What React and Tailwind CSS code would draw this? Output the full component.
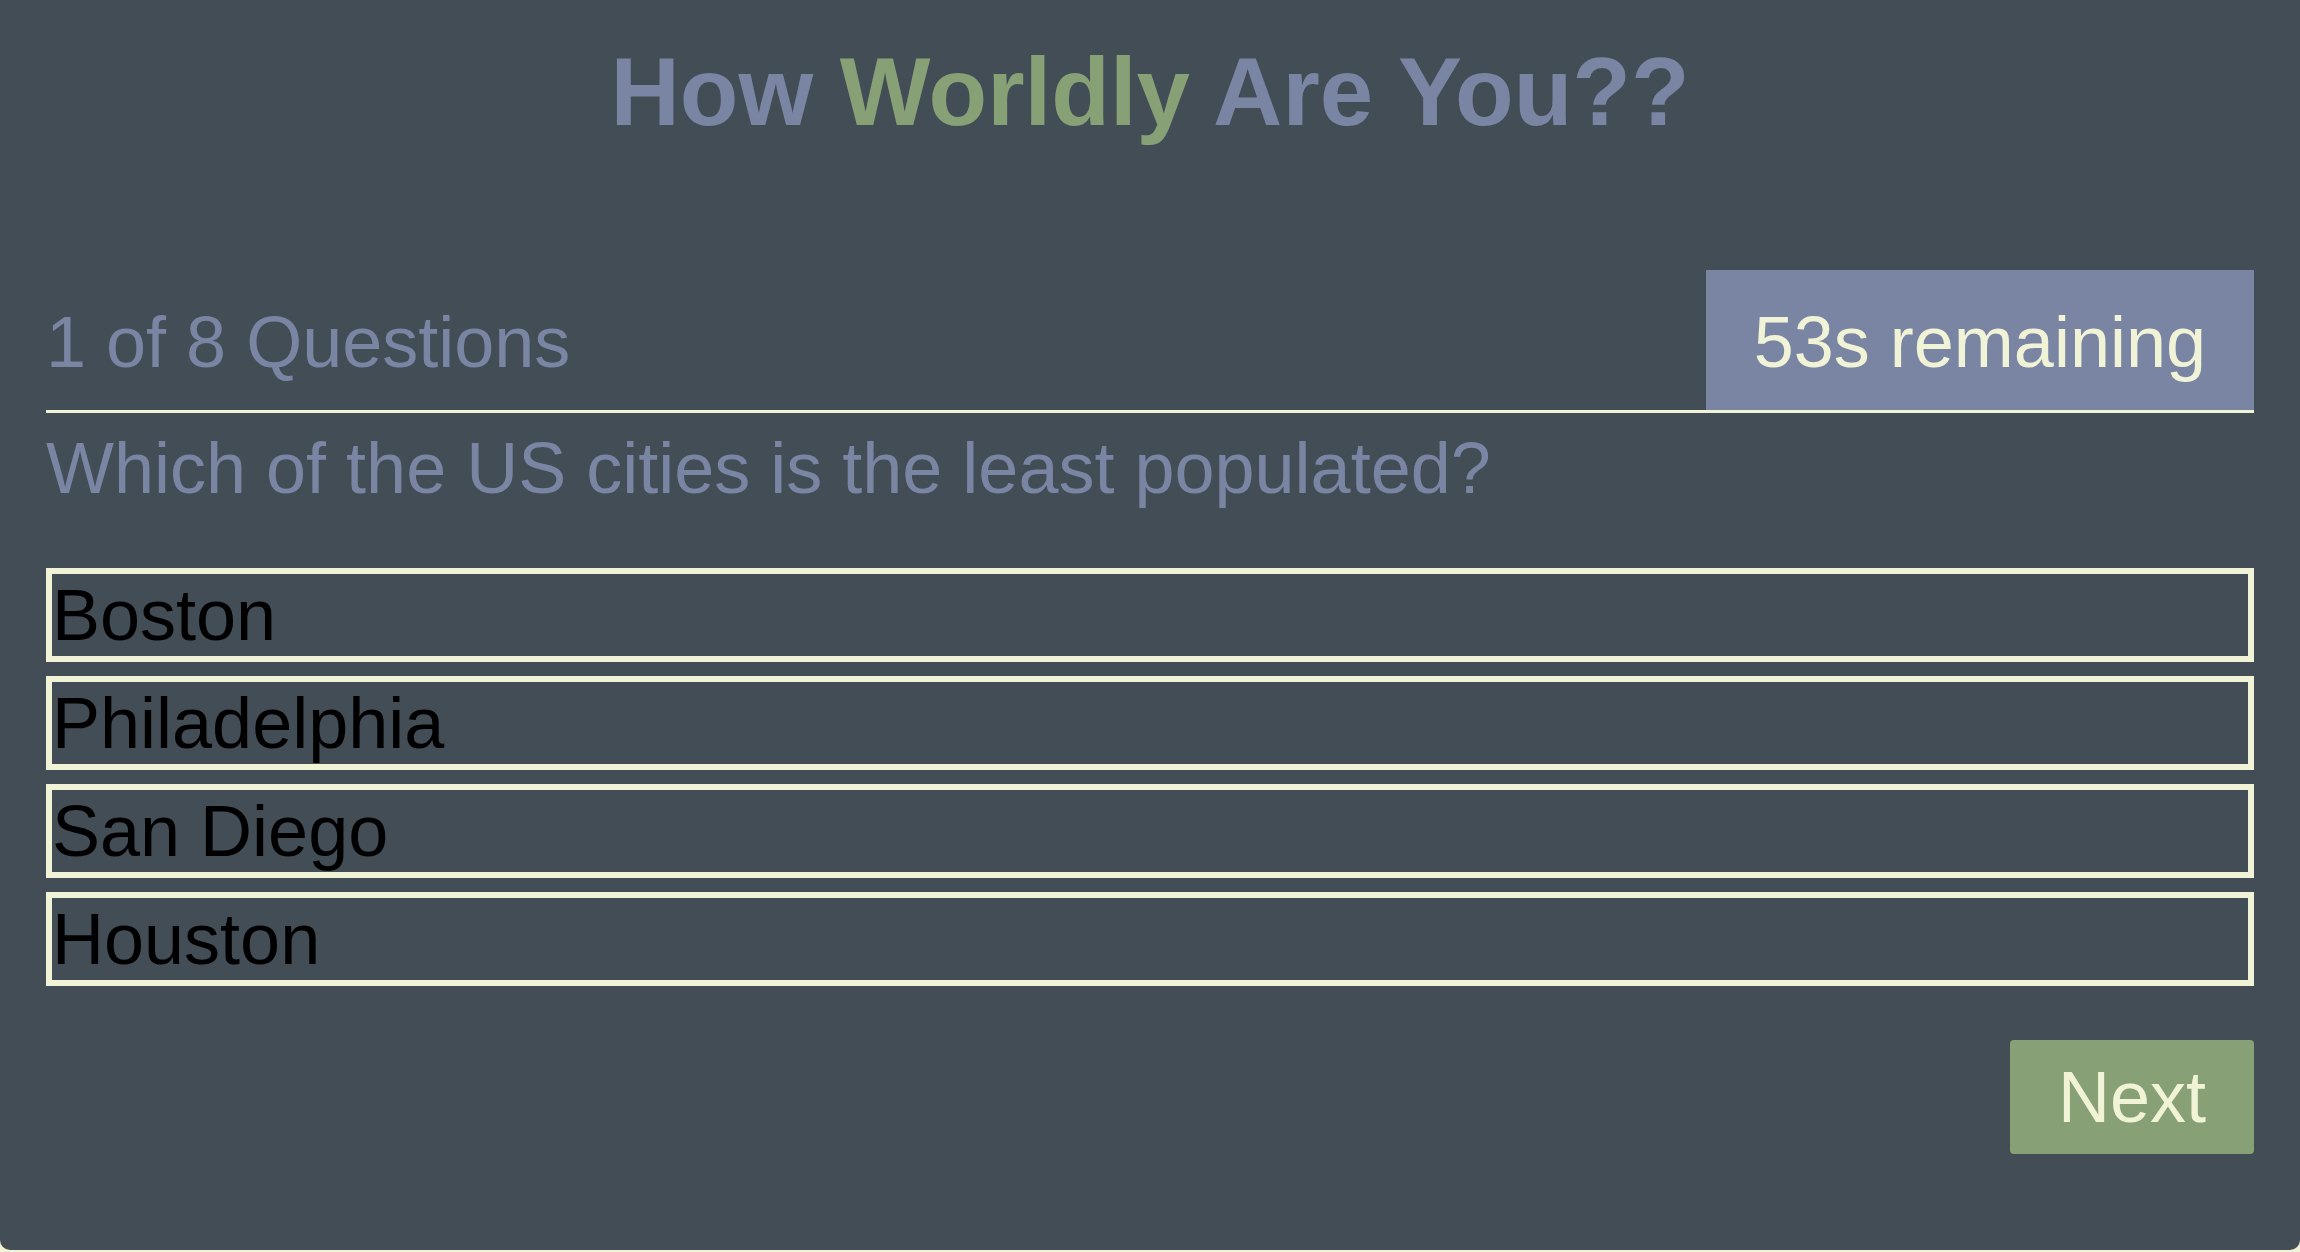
import React, { useState } from "react";

const options = ["Boston", "Philadelphia", "San Diego", "Houston"];

export default function App() {
  const [selected, setSelected] = useState(null);

  return (
    <div className="min-h-screen bg-[#f0f3d5] font-['Liberation_Sans',Arial,sans-serif]">
      <div className="h-[1250px] bg-[#434d56] rounded-b-[10px] px-[46px] pt-[44px]">
        {/* Title */}
        <h1 className="text-center text-[96px] leading-none font-bold text-[#7a84a3]">
          How <span className="text-[#87a076]">Worldly</span> Are You??
        </h1>

        {/* Progress + timer */}
        <div className="mt-[130px] flex items-center justify-between border-b-[3px] border-[#f0f3d5]">
          <p className="pt-[4px] text-[72px] leading-none text-[#7a84a3]">
            1 of 8 Questions
          </p>
          <div className="h-[140px] px-[48px] flex items-center bg-[#7a84a3]">
            <span className="pt-[4px] text-[72px] leading-none text-[#f0f3d5]">
              53s remaining
            </span>
          </div>
        </div>

        {/* Question */}
        <h2 className="mt-[19px] text-[72px] leading-none text-[#7a84a3]">
          Which of the US cities is the least populated?
        </h2>

        {/* Options */}
        <div className="mt-[64px] flex flex-col gap-[14px]">
          {options.map((opt, i) => (
            <button
              key={opt}
              type="button"
              onClick={() => setSelected(i)}
              className="h-[94px] w-full border-[6px] border-[#f0f3d5] text-left text-[72px] leading-[82px] text-black"
            >
              {opt}
            </button>
          ))}
        </div>

        {/* Next */}
        <div className="mt-[54px] flex justify-end">
          <button
            type="button"
            className="h-[114px] w-[244px] rounded-[4px] bg-[#87a076] text-[72px] leading-none text-[#f0f3d5]"
          >
            Next
          </button>
        </div>
      </div>
    </div>
  );
}
